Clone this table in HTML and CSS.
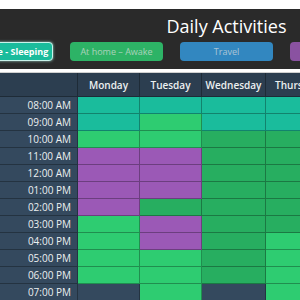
FILE: index.html
```html
<!DOCTYPE html>
<html>
<head>
<meta charset="utf-8">
<link rel="stylesheet" href="styles.css">
</head>
<body>
<div class="page">
  <header class="header">
    <h1 class="title">Daily Activities</h1>
    <div class="buttons">
      <button class="btn btn-sleep active">At home - Sleeping</button>
      <button class="btn btn-awake">At home – Awake</button>
      <button class="btn btn-travel">Travel</button>
      <button class="btn btn-work">Work</button>
      <button class="btn btn-other">Other</button>
    </div>
  </header>
  <div class="grid">
    <div class="hd corner"></div>
    <div class="hd">Monday</div>
    <div class="hd">Tuesday</div>
    <div class="hd">Wednesday</div>
    <div class="hd">Thursday</div>

    <div class="time">08:00 AM</div><div class="c t"></div><div class="c t"></div><div class="c t"></div><div class="c t"></div>
    <div class="time">09:00 AM</div><div class="c t"></div><div class="c l"></div><div class="c t"></div><div class="c t"></div>
    <div class="time">10:00 AM</div><div class="c l"></div><div class="c l"></div><div class="c d"></div><div class="c d"></div>
    <div class="time">11:00 AM</div><div class="c p"></div><div class="c p"></div><div class="c d"></div><div class="c d"></div>
    <div class="time">12:00 AM</div><div class="c p"></div><div class="c p"></div><div class="c d"></div><div class="c d"></div>
    <div class="time">01:00 PM</div><div class="c p"></div><div class="c p"></div><div class="c d"></div><div class="c d"></div>
    <div class="time">02:00 PM</div><div class="c p"></div><div class="c d"></div><div class="c d"></div><div class="c d"></div>
    <div class="time">03:00 PM</div><div class="c l"></div><div class="c p"></div><div class="c d"></div><div class="c d"></div>
    <div class="time">04:00 PM</div><div class="c l"></div><div class="c p"></div><div class="c d"></div><div class="c l"></div>
    <div class="time">05:00 PM</div><div class="c l"></div><div class="c l"></div><div class="c d"></div><div class="c l"></div>
    <div class="time">06:00 PM</div><div class="c l"></div><div class="c l"></div><div class="c d"></div><div class="c l"></div>
    <div class="time">07:00 PM</div><div class="c e"></div><div class="c l"></div><div class="c e"></div><div class="c l"></div>
    <div class="time">08:00 PM</div><div class="c e"></div><div class="c l"></div><div class="c e"></div><div class="c l"></div>
  </div>
</div>
</body>
</html>
```
FILE: styles.css
```css
html, body {
  margin: 0;
  padding: 0;
  background: #ffffff;
  overflow: hidden;
}
body {
  font-family: "Open Sans", "Noto Sans", sans-serif;
}
.page {
  width: 533px;
  margin-left: -40px;
  padding-top: 9px;
}
.header {
  background: #2a2a2a;
  height: 60px;
  box-sizing: border-box;
  padding-top: 5px;
  display: flex;
  flex-direction: column;
  align-items: center;
}
.title {
  margin: 0;
  font-size: 18px;
  font-weight: 400;
  line-height: 24px;
  color: #ffffff;
}
.buttons {
  display: flex;
  gap: 17px;
  margin-top: 4px;
}
.btn {
  width: 93px;
  height: 19px;
  box-sizing: border-box;
  border: 1px solid transparent;
  border-radius: 4px;
  padding: 0;
  font-family: inherit;
  font-size: 9px;
  color: rgba(255, 255, 255, 0.7);
  opacity: 0.85;
  white-space: nowrap;
}
.btn-sleep { background: #1abc9c; }
.btn-awake { background: #2ecc71; }
.btn-travel { background: #3498db; }
.btn-work { background: #9b59b6; }
.btn-other { background: #e67e22; }
.btn.active {
  opacity: 1;
  color: #ffffff;
  font-weight: 700;
  border-color: #c8f3ea;
  box-shadow: 0 0 3px rgba(180, 240, 230, 0.8);
}
.grid {
  margin-top: 3px;
  border-top: 1px solid #d0d0d0;
  display: grid;
  grid-template-columns: 118px 62px 62px 64px 64px;
  grid-auto-rows: 17px;
  grid-template-rows: 24px;
}
.grid > div {
  box-sizing: border-box;
  border-right: 1px solid rgba(0, 0, 0, 0.3);
  border-bottom: 1px solid rgba(0, 0, 0, 0.3);
}
.hd {
  background: #2c3e50;
  color: #ecf0f1;
  font-size: 10px;
  font-weight: 600;
  display: flex;
  align-items: center;
  justify-content: center;
}
.time {
  background: #34495e;
  color: #ecf0f1;
  font-size: 10px;
  display: flex;
  align-items: center;
  justify-content: flex-end;
  padding-right: 6px;
}
.t { background: #1abc9c; }
.l { background: #2ecc71; }
.d { background: #27ae60; }
.p { background: #9b59b6; }
.e { background: #34495e; }
```
